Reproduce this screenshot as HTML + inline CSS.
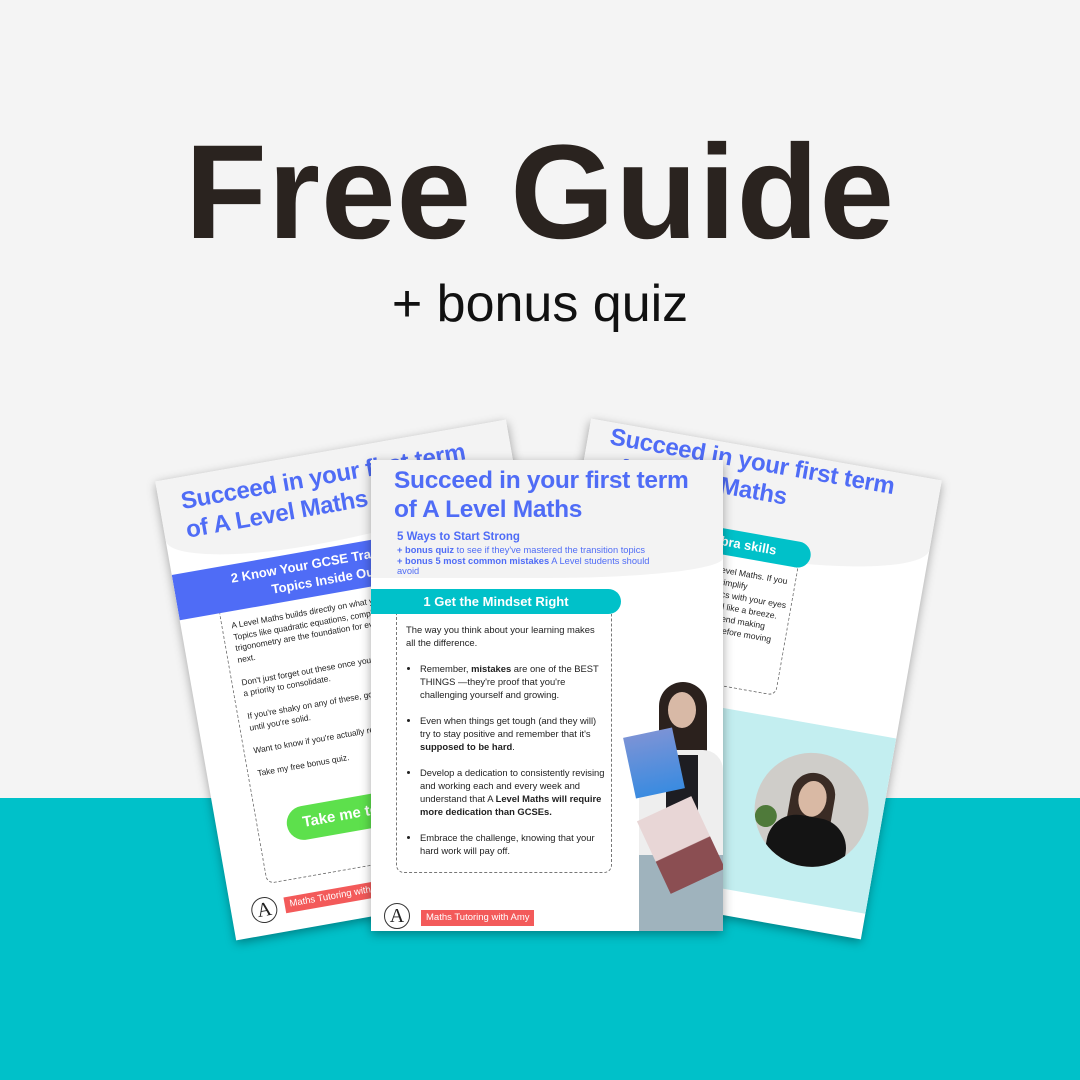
<!DOCTYPE html>
<html><head><meta charset="utf-8"><style>
*{margin:0;padding:0;box-sizing:border-box}
body{width:1080px;height:1080px;overflow:hidden;background:#f4f4f4;font-family:"Liberation Sans",sans-serif;position:relative}
.teal{position:absolute;left:0;top:798px;width:1080px;height:282px;background:#00c1c9}
h1{position:absolute;left:0;width:1080px;top:118px;text-align:center;font-size:134px;font-weight:700;color:#2a231f;letter-spacing:1px;line-height:150px}
.sub{position:absolute;left:0;width:1080px;top:274px;text-align:center;font-size:52px;color:#111;line-height:60px}
.page{position:absolute;background:#fff;overflow:hidden;box-shadow:0 3px 10px rgba(0,0,0,.35)}
.hdr{position:absolute;left:0;top:0;width:100%;background:#f3f3f3;border-bottom-right-radius:60% 40px;border-bottom-left-radius:40% 30px}
.ttl{position:absolute;color:#4f6cf6;font-weight:700;font-size:24.5px;line-height:29px;letter-spacing:-0.3px}
.txt{font-size:9.4px;line-height:13px;color:#222}
.box{position:absolute;border:1px dashed #777;border-top:none;border-radius:0 0 8px 8px}
.red{position:absolute;background:#f35a5a;color:#fff;font-size:9.5px;line-height:16px;padding:0 5px}
.logo{position:absolute;width:26px;height:26px;border:1px solid #333;border-radius:50%;font-family:"Liberation Serif",serif;font-size:20px;line-height:25px;text-align:center;color:#222}
ul{padding-left:14px}li{margin-bottom:13px}
</style></head><body>
<div class="teal"></div>
<h1>Free Guide</h1>
<div class="sub">+ bonus quiz</div>

<!-- left page -->
<div class="page" style="left:193px;top:447px;width:356px;height:466px;transform:rotate(-10deg)">
  <div class="hdr" style="height:90px"></div>
  <div class="ttl" style="left:22px;top:10px;font-size:24px">Succeed in your first term<br>of A Level Maths</div>
  <div style="position:absolute;left:0;top:95px;width:300px;height:46px;background:#4f6cf6;color:#fff;font-weight:700;font-size:13px;line-height:18px;text-align:center;padding-top:5px">2 Know Your GCSE Transition<br>Topics Inside Out</div>
  <div class="box" style="left:40px;top:141px;width:260px;height:275px"></div>
  <div class="txt" style="position:absolute;left:50px;top:150px;width:230px;font-size:8.4px;line-height:11.5px">A Level Maths builds directly on what you learned at GCSE. Topics like quadratic equations, completing the square, and trigonometry are the foundation for everything that comes next.<br><br>Don't just forget out these once you start A Level, make them a priority to consolidate.<br><br>If you're shaky on any of these, go back and practise them until you're solid.<br><br>Want to know if you're actually ready?<br><br>Take my free bonus quiz.</div>
  <div style="position:absolute;left:70px;top:345px;width:170px;height:34px;border-radius:17px;background:#5de04c;color:#fff;font-weight:700;font-size:15px;line-height:34px;text-align:center">Take me to the quiz</div>
  <div class="logo" style="left:20px;top:428px">A</div>
  <div class="red" style="left:54px;top:432px">Maths Tutoring with Amy</div>
</div>

<!-- right page -->
<div class="page" style="left:548px;top:446px;width:356px;height:466px;transform:rotate(10deg)">
  <div class="hdr" style="height:110px"></div>
  <div class="ttl" style="left:22px;top:0px;font-size:24px">Succeed in your first term<br>of A Level Maths</div>
  <div style="position:absolute;left:0;top:85px;width:240px;height:26px;border-radius:0 13px 13px 0;background:#00c1c9;color:#fff;font-weight:700;font-size:13px;line-height:26px;text-align:center">3 Master your algebra skills</div>
  <div class="box" style="left:30px;top:111px;width:200px;height:130px"></div>
  <div class="txt" style="position:absolute;left:40px;top:120px;width:185px;font-size:8.6px;line-height:12px">Algebra is the language of A Level Maths. If you can expand, factorise quickly, simplify expressions and solve quadratics with your eyes closed, then other topics will feel like a breeze. Practising these skills; I recommend making sure you're confident with them before moving on.</div>
  <div style="position:absolute;left:0;top:262px;width:356px;height:178px;background:#c3eef0"></div>
  <div style="position:absolute;left:228px;top:290px;width:114px;height:114px;border-radius:50%;overflow:hidden;background:#cfcdc9">
    <div style="position:absolute;left:34px;top:20px;width:44px;height:60px;border-radius:22px 22px 8px 8px;background:#3a2b24"></div>
    <div style="position:absolute;left:42px;top:28px;width:28px;height:36px;border-radius:50%;background:#d9b9a4"></div>
    <div style="position:absolute;left:18px;top:64px;width:80px;height:60px;border-radius:30px 30px 0 0;background:#141414"></div>
    <div style="position:absolute;left:2px;top:60px;width:22px;height:22px;border-radius:50%;background:#4f7a3a"></div>
  </div>
</div>

<!-- center page -->
<div class="page" style="left:371px;top:460px;width:352px;height:471px">
  <div class="hdr" style="height:118px;border-bottom-right-radius:50% 20px;border-bottom-left-radius:0"></div>
  <div class="ttl" style="left:23px;top:6px">Succeed in your first term<br>of A Level Maths</div>
  <div style="position:absolute;left:26px;top:71px;color:#4f6cf6;font-size:11.5px;font-weight:700">5 Ways to Start Strong</div>
  <div style="position:absolute;left:26px;top:85px;width:270px;color:#4f6cf6;font-size:9.3px;line-height:10.5px"><b>+ bonus quiz</b> to see if they've mastered the transition topics<br><b>+ bonus 5 most common mistakes</b> A Level students should avoid</div>
  <div style="position:absolute;left:0;top:129px;width:250px;height:25px;border-radius:0 13px 13px 0;background:#00c1c9;color:#fff;font-weight:700;font-size:13px;line-height:25px;text-align:center">1 Get the Mindset Right</div>
  <div class="box" style="left:25px;top:154px;width:216px;height:259px"></div>
  <div class="txt" style="position:absolute;left:35px;top:163px;width:200px">The way you think about your learning makes all the difference.<br><br>
  <ul><li>Remember, <b>mistakes</b> are one of the BEST THINGS —they're proof that you're challenging yourself and growing.</li>
  <li>Even when things get tough (and they will) try to stay positive and remember that it's <b>supposed to be hard</b>.</li>
  <li>Develop a dedication to consistently revising and working each and every week and understand that A <b>Level Maths will require more dedication than GCSEs.</b></li>
  <li>Embrace the challenge, knowing that your hard work will pay off.</li></ul></div>
  <!-- person -->
  <div style="position:absolute;left:288px;top:222px;width:48px;height:80px;border-radius:24px 24px 10px 10px;background:#2b211d"></div>
  <div style="position:absolute;left:297px;top:232px;width:28px;height:36px;border-radius:50%;background:#d8b9a6"></div>
  <div style="position:absolute;left:268px;top:290px;width:84px;height:120px;border-radius:20px 20px 0 0;background:#eeeeee"></div>
  <div style="position:absolute;left:295px;top:295px;width:32px;height:90px;background:#1d1d22"></div>
  <div style="position:absolute;left:268px;top:395px;width:84px;height:76px;background:#9fb3bd"></div>
  <div style="position:absolute;left:258px;top:272px;width:50px;height:62px;background:linear-gradient(#7b93d6,#3a8be0);transform:rotate(-12deg)"></div>
  <div style="position:absolute;left:280px;top:345px;width:60px;height:80px;background:linear-gradient(#e8d6d6 55%,#8b4e52 56%);transform:rotate(-25deg)"></div>
  <div class="logo" style="left:13px;top:443px">A</div>
  <div class="red" style="left:50px;top:450px">Maths Tutoring with Amy</div>
</div>
</body></html>
